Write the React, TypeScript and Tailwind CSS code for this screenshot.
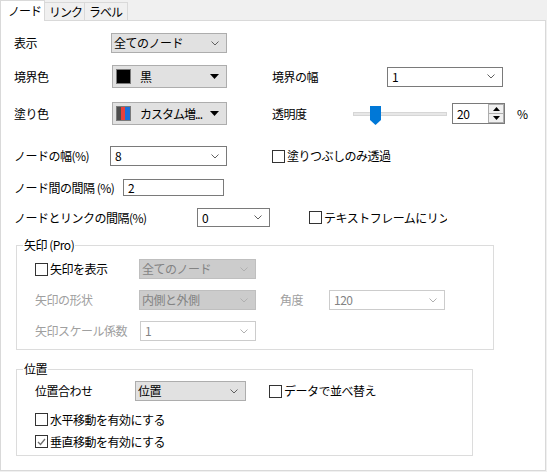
import React from "react";

function Chevron({ color = "#606060" }: { color?: string }) {
  return (
    <svg width="8" height="5" viewBox="0 0 8 5" className="shrink-0">
      <path d="M0.5 0.5 L4 4 L7.5 0.5" stroke={color} fill="none" strokeWidth="1" />
    </svg>
  );
}

function Tri() {
  return (
    <svg width="9" height="5" viewBox="0 0 9 5" className="shrink-0">
      <path d="M0 0 H9 L4.5 5 Z" fill="#000" />
    </svg>
  );
}

type Variant = "gray" | "white" | "dgray" | "dwhite";

function Combo({ className, text, variant }: { className: string; text: string; variant: Variant }) {
  const v =
    variant === "gray"
      ? "bg-[#e1e1e1] border-[#adadad] text-black pl-[2px]"
      : variant === "white"
      ? "bg-white border-[#7a7a7a] text-black pl-[4px]"
      : variant === "dgray"
      ? "bg-[#cccccc] border-[#bfbfbf] text-[#838383] pl-[2px]"
      : "bg-white border-[#cccccc] text-[#838383] pl-[4px]";
  const chev = variant === "dgray" || variant === "dwhite" ? "#b0b0b0" : "#606060";
  return (
    <div className={`${className} ${v} border flex items-center pr-[7px] shrink-0`}>
      <span className="flex-1 whitespace-nowrap overflow-hidden">{text}</span>
      <Chevron color={chev} />
    </div>
  );
}

function ColorCombo({ custom, text }: { custom?: boolean; text: string }) {
  return (
    <div className="w-[115px] h-[23px] bg-[#e1e1e1] border border-[#adadad] flex items-center pl-[3px] pr-[7px] shrink-0">
      {custom ? (
        <div className="w-[15px] h-[15px] flex border border-[#7a7a7a]">
          <div className="w-[4px] bg-[#4d4d4d]" />
          <div className="w-[4px] bg-[#e8413c]" />
          <div className="flex-1 bg-[#1c6fd9]" />
        </div>
      ) : (
        <div className="w-[15px] h-[15px] bg-black border border-[#7a7a7a]" />
      )}
      <span className="ml-[9px] flex-1 whitespace-nowrap tracking-[-1px]">{text}</span>
      <Tri />
    </div>
  );
}

function Check({ checked }: { checked?: boolean }) {
  return (
    <span className="w-[13px] h-[13px] border border-[#333333] bg-white flex items-center justify-center shrink-0">
      {checked && (
        <svg width="9" height="8" viewBox="0 0 9 8">
          <path d="M1 4 L3.5 6.5 L8 1" stroke="#6e6e6e" strokeWidth="1.3" fill="none" />
        </svg>
      )}
    </span>
  );
}

function Slider() {
  return (
    <div className="relative w-[94px] h-[23px] flex items-center shrink-0">
      <div className="w-full h-[4px] bg-[#e7e7e7] border border-[#d6d6d6]" />
      <svg className="absolute left-[17px] top-[4px]" width="11" height="19" viewBox="0 0 11 19">
        <path d="M0 0 H11 V14 L5.5 19 L0 14 Z" fill="#0078d7" />
      </svg>
    </div>
  );
}

function Spin() {
  return (
    <div className="ml-[5px] flex w-[53px] h-[21px] border border-[#7a7a7a] bg-white shrink-0">
      <div className="flex-1 pl-[4px] flex items-center">20</div>
      <div className="w-[16px] flex flex-col">
        <div className="flex-1 bg-[#f0f0f0] border border-[#adadad] flex items-center justify-center">
          <svg width="7" height="4" viewBox="0 0 7 4">
            <path d="M0 4 H7 L3.5 0 Z" fill="#000" />
          </svg>
        </div>
        <div className="flex-1 bg-[#f0f0f0] border border-t-0 border-[#adadad] flex items-center justify-center">
          <svg width="7" height="4" viewBox="0 0 7 4">
            <path d="M0 0 H7 L3.5 4 Z" fill="#000" />
          </svg>
        </div>
      </div>
    </div>
  );
}

export default function App() {
  return (
    <div className="w-[547px] h-[472px] bg-[#f0f0f0] font-['Noto_Sans_CJK_JP','Noto_Sans_CJK_SC',sans-serif] text-[12px] leading-[16px] tracking-[-0.5px] text-black overflow-hidden">
      <div className="flex items-end h-[20px] tracking-[-1px]">
        <div className="relative z-10 h-[21px] w-[45px] -mb-[1px] bg-white border border-b-0 border-[#d9d9d9] pl-[7px] flex items-center">
          ノード
        </div>
        <div className="h-[18px] w-[40px] border-t border-r border-[#d9d9d9] pl-[4px] flex items-center">リンク</div>
        <div className="h-[18px] w-[43px] border-t border-r border-[#d9d9d9] pl-[4px] flex items-center">ラベル</div>
      </div>
      <div className="w-[546px] h-[451px] bg-white border border-[#d9d9d9] flex flex-col">
        {/* Row 1 */}
        <div className="flex items-center h-[20px] mt-[12px] pl-[13px]">
          <div className="w-[97px]">表示</div>
          <Combo className="w-[116px] h-[20px]" variant="gray" text="全てのノード" />
        </div>
        {/* Row 2 */}
        <div className="flex items-center h-[23px] mt-[12px] pl-[13px]">
          <div className="w-[98px]">境界色</div>
          <ColorCombo text="黒" />
          <div className="w-[115px] ml-[45px]">境界の幅</div>
          <Combo className="w-[116px] h-[20px]" variant="white" text="1" />
        </div>
        {/* Row 3 */}
        <div className="flex items-center h-[23px] mt-[14px] pl-[13px]">
          <div className="w-[98px]">塗り色</div>
          <ColorCombo custom text="カスタム増..." />
          <div className="w-[81px] ml-[45px]">透明度</div>
          <Slider />
          <Spin />
          <div className="ml-[12px]">%</div>
        </div>
        {/* Row 4 */}
        <div className="flex items-center h-[20px] mt-[21px] pl-[13px]">
          <div className="w-[96px]">ノードの幅(%)</div>
          <Combo className="w-[117px] h-[20px]" variant="white" text="8" />
          <div className="ml-[45px] flex items-center">
            <Check />
            <span className="ml-[2px]">塗りつぶしのみ透過</span>
          </div>
        </div>
        {/* Row 5 */}
        <div className="flex items-center h-[17px] mt-[13px] pl-[13px]">
          <div className="w-[109px]">ノード間の間隔 (%)</div>
          <div className="w-[101px] h-[17px] border border-[#7a7a7a] pl-[4px] flex items-center">2</div>
        </div>
        {/* Row 6 */}
        <div className="flex items-center h-[19px] mt-[12px] pl-[13px]">
          <div className="w-[183px]">ノードとリンクの間隔(%)</div>
          <Combo className="w-[73px] h-[19px]" variant="white" text="0" />
          <div className="ml-[39px] flex items-center">
            <Check />
            <span className="ml-[2px] w-[123px] overflow-hidden whitespace-nowrap">テキストフレームにリンク</span>
          </div>
        </div>
        {/* Group 1 */}
        <div className="relative ml-[15px] mt-[18px] w-[478px] h-[105px] border border-[#dcdcdc] flex flex-col">
          <span className="absolute left-[6px] -top-[9px] px-[1px] bg-white">矢印 (Pro)</span>
          <div className="flex items-center h-[20px] mt-[13px] pl-[18px]">
            <div className="w-[104px] flex items-center">
              <Check />
              <span className="ml-[2px]">矢印を表示</span>
            </div>
            <Combo className="w-[117px] h-[20px]" variant="dgray" text="全てのノード" />
          </div>
          <div className="flex items-center h-[20px] mt-[11px] pl-[18px]">
            <div className="w-[104px] text-[#a0a0a0]">矢印の形状</div>
            <Combo className="w-[117px] h-[20px]" variant="dgray" text="内側と外側" />
            <div className="ml-[24px] w-[49px] text-[#a0a0a0]">角度</div>
            <Combo className="w-[116px] h-[20px]" variant="dwhite" text="120" />
          </div>
          <div className="flex items-center h-[20px] mt-[11px] pl-[18px]">
            <div className="w-[105px] text-[#a0a0a0]">矢印スケール係数</div>
            <Combo className="w-[116px] h-[20px]" variant="dwhite" text="1" />
          </div>
        </div>
        {/* Group 2 */}
        <div className="relative ml-[15px] mt-[19px] w-[457px] h-[87px] border border-[#dcdcdc] flex flex-col">
          <span className="absolute left-[6px] -top-[9px] px-[1px] bg-white">位置</span>
          <div className="flex items-center h-[20px] mt-[11px] pl-[18px]">
            <div className="w-[100px]">位置合わせ</div>
            <Combo className="w-[111px] h-[20px]" variant="gray" text="位置" />
            <div className="ml-[23px] flex items-center">
              <Check />
              <span className="ml-[2px]">データで並べ替え</span>
            </div>
          </div>
          <div className="flex items-center h-[13px] mt-[12px] pl-[18px]">
            <Check />
            <span className="ml-[2px]">水平移動を有効にする</span>
          </div>
          <div className="flex items-center h-[13px] mt-[9px] pl-[18px]">
            <Check checked />
            <span className="ml-[2px]">垂直移動を有効にする</span>
          </div>
        </div>
      </div>
    </div>
  );
}
